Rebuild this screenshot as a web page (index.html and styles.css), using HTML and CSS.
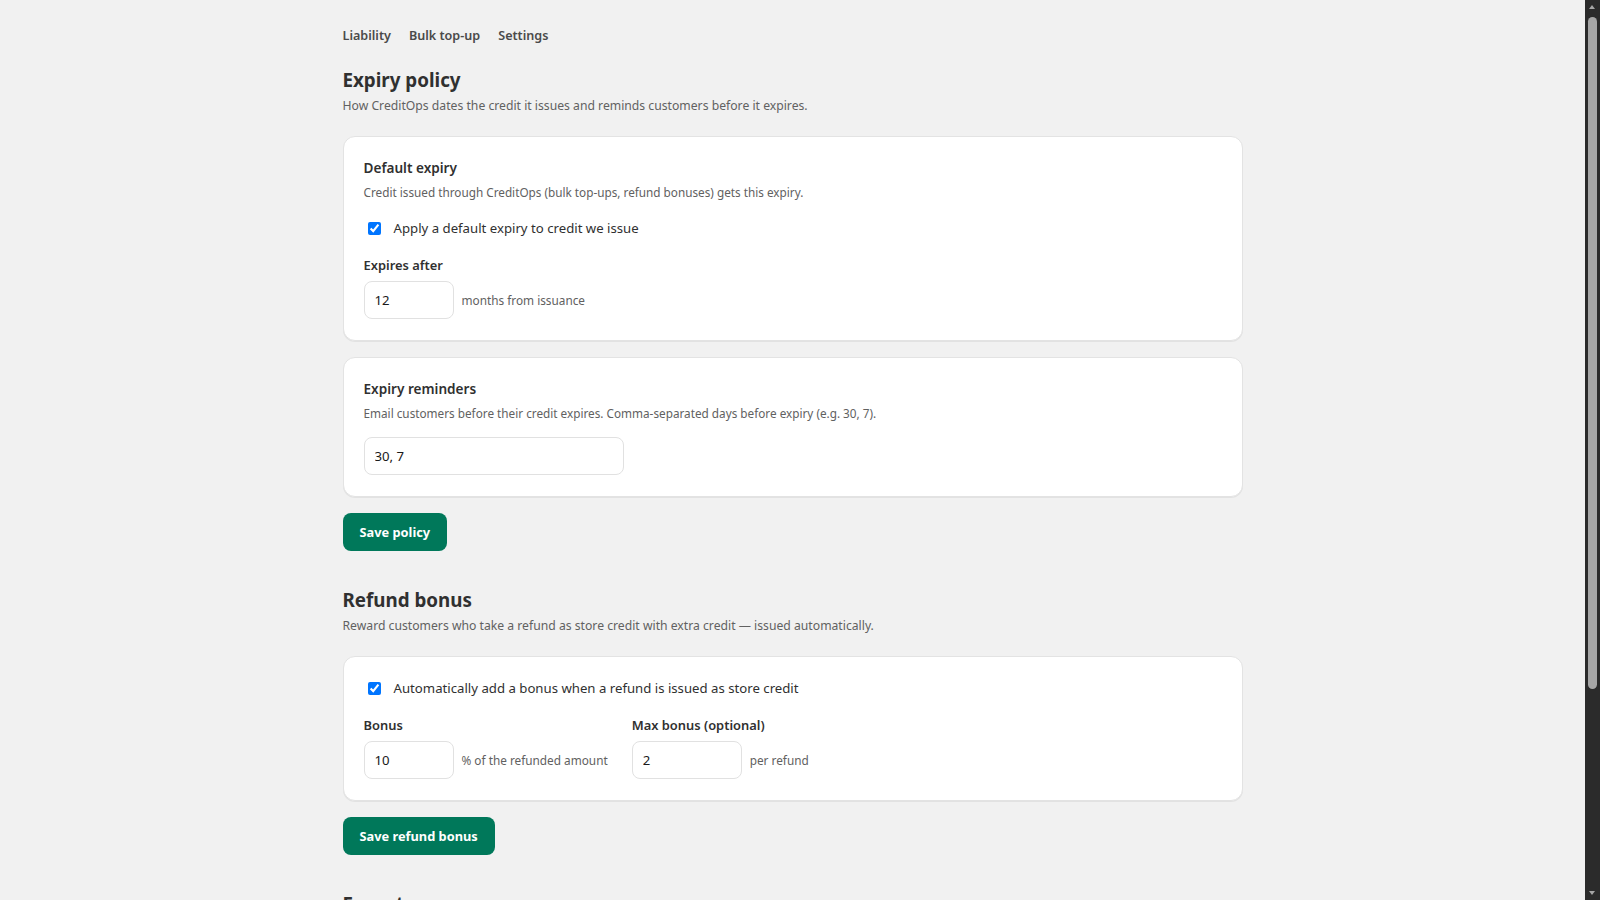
FILE: index.html
```html
<!DOCTYPE html>
<html lang="en">
<head>
    <meta charset="UTF-8">
    <meta name="viewport" content="width=device-width, initial-scale=1.0">
    <title>CreditOps Settings</title>
    <link rel="stylesheet" href="styles.css">
</head>
<body>
    <div class="page">
        <nav class="tabs">
            <a href="#">Liability</a>
            <a href="#">Bulk top-up</a>
            <a href="#">Settings</a>
        </nav>

        <section class="section first">
            <h1 class="section-title">Expiry policy</h1>
            <p class="section-sub">How CreditOps dates the credit it issues and reminds customers before it expires.</p>

            <div class="card">
                <h3 class="card-title">Default expiry</h3>
                <p class="card-sub">Credit issued through CreditOps (bulk top-ups, refund bonuses) gets this expiry.</p>
                <label class="check">
                    <input type="checkbox" checked>
                    <span>Apply a default expiry to credit we issue</span>
                </label>
                <div class="field">
                    <label class="field-label" for="expiry-months">Expires after</label>
                    <div class="inline">
                        <input class="text-input short" id="expiry-months" type="text" value="12">
                        <span class="hint">months from issuance</span>
                    </div>
                </div>
            </div>

            <div class="card">
                <h3 class="card-title">Expiry reminders</h3>
                <p class="card-sub">Email customers before their credit expires. Comma-separated days before expiry (e.g. 30, 7).</p>
                <input class="text-input wide reminder" type="text" value="30, 7">
            </div>

            <button class="btn" type="button">Save policy</button>
        </section>

        <section class="section">
            <h2 class="section-title">Refund bonus</h2>
            <p class="section-sub">Reward customers who take a refund as store credit with extra credit — issued automatically.</p>

            <div class="card">
                <label class="check">
                    <input type="checkbox" checked>
                    <span>Automatically add a bonus when a refund is issued as store credit</span>
                </label>
                <div class="field-row">
                    <div class="field">
                        <label class="field-label" for="bonus-pct">Bonus</label>
                        <div class="inline">
                            <input class="text-input short" id="bonus-pct" type="text" value="10">
                            <span class="hint">% of the refunded amount</span>
                        </div>
                    </div>
                    <div class="field">
                        <label class="field-label" for="bonus-max">Max bonus (optional)</label>
                        <div class="inline">
                            <input class="text-input medium" id="bonus-max" type="text" value="2">
                            <span class="hint">per refund</span>
                        </div>
                    </div>
                </div>
            </div>

            <button class="btn" type="button">Save refund bonus</button>
        </section>

        <section class="section">
            <h2 class="section-title">Exports</h2>
            <p class="section-sub">Download a ledger of issued, redeemed and expired credit.</p>

            <div class="card">
                <label class="check">
                    <input type="checkbox">
                    <span>Email a monthly ledger export to the store owner</span>
                </label>
                <div class="field">
                    <label class="field-label" for="export-day">Send on day</label>
                    <div class="inline">
                        <input class="text-input short" id="export-day" type="text" value="1">
                        <span class="hint">of each month</span>
                    </div>
                </div>
            </div>

            <button class="btn" type="button">Save exports</button>
        </section>
    </div>

    <!-- window scrollbar -->
    <div class="scrollbar">
        <span class="arrow up"></span>
        <span class="thumb"></span>
        <span class="arrow down"></span>
    </div>
</body>
</html>
```

FILE: styles.css
```css
html {
    background: #f1f1f1;
}
body {
    margin: 0;
    padding-right: 15px;
    font-family: "Noto Sans", "Open Sans", sans-serif;
    color: #303030;
    background: #f1f1f1;
}

.page {
    max-width: 900px;
    margin: 0 auto;
    padding: 26px 0 10px;
}

.tabs {
    display: flex;
    gap: 18px;
    height: 20px;
}
.tabs a {
    font-size: 12.6px;
    line-height: 20px;
    font-weight: 600;
    color: #4a4a4a;
    text-decoration: none;
}

.section {
    margin-top: 35px;
}
.section.first {
    margin-top: 20px;
}
.section-title {
    margin: 0;
    font-size: 18.8px;
    line-height: 28px;
    font-weight: 700;
    color: #303030;
}
.section-sub {
    margin: 2px 0 20px;
    font-size: 12.2px;
    line-height: 20px;
    color: #616161;
}

.card {
    background: #fff;
    border: 1px solid #e3e3e3;
    border-radius: 12px;
    box-shadow: 0 1px 0 rgba(0, 0, 0, 0.06);
    padding: 21px 20px;
    margin-bottom: 16px;
}
.card-title {
    margin: 0 0 4px;
    font-size: 13.6px;
    line-height: 20px;
    font-weight: 600;
    color: #303030;
}
.card-sub {
    margin: 0;
    font-size: 11.75px;
    line-height: 20px;
    color: #616161;
}
.card-sub + .check {
    margin-top: 16px;
}

.check {
    display: flex;
    align-items: center;
    height: 20px;
    font-size: 13.2px;
    line-height: 20px;
    color: #303030;
}
.check input {
    margin: 0 13px 0 4px;
    width: 13px;
    height: 13px;
}

.field {
    margin-top: 17px;
}
.field-row {
    display: flex;
    gap: 24px;
}
.field-label {
    display: block;
    margin-bottom: 6px;
    font-size: 12.9px;
    line-height: 20px;
    font-weight: 600;
    color: #303030;
}
.inline {
    display: flex;
    align-items: center;
    gap: 8px;
}
.hint {
    font-size: 11.8px;
    color: #616161;
}

.text-input {
    box-sizing: border-box;
    height: 38px;
    padding: 0 10px;
    border: 1px solid #e1e1e1;
    border-radius: 8px;
    background: #fff;
    font-family: inherit;
    font-size: 13.2px;
    color: #1a1a1a;
    outline: none;
}
.text-input.short {
    width: 90px;
}
.text-input.medium {
    width: 110px;
}
.text-input.wide {
    width: 260px;
}
.reminder {
    display: block;
    margin-top: 14px;
}

.btn {
    display: block;
    height: 38px;
    padding: 0 17px;
    border: none;
    border-radius: 8px;
    background: #00785a;
    color: #fff;
    font-family: inherit;
    font-size: 12.8px;
    font-weight: 700;
    cursor: pointer;
}
.btn:hover {
    background: #006148;
}

/* dark classic scrollbar pinned to the window edge */
.scrollbar {
    position: fixed;
    top: 0;
    right: 0;
    width: 15px;
    height: 100vh;
    background: #2b2b2b;
}
.thumb {
    position: absolute;
    top: 17px;
    left: 3px;
    width: 9px;
    height: 672px;
    border-radius: 5px;
    background: #a6a6a6;
}
.arrow {
    position: absolute;
    left: 4px;
    width: 0;
    height: 0;
    border-left: 3.5px solid transparent;
    border-right: 3.5px solid transparent;
}
.arrow.up {
    top: 5px;
    border-bottom: 4px solid #a6a6a6;
}
.arrow.down {
    bottom: 5px;
    border-top: 4px solid #a6a6a6;
}
```
